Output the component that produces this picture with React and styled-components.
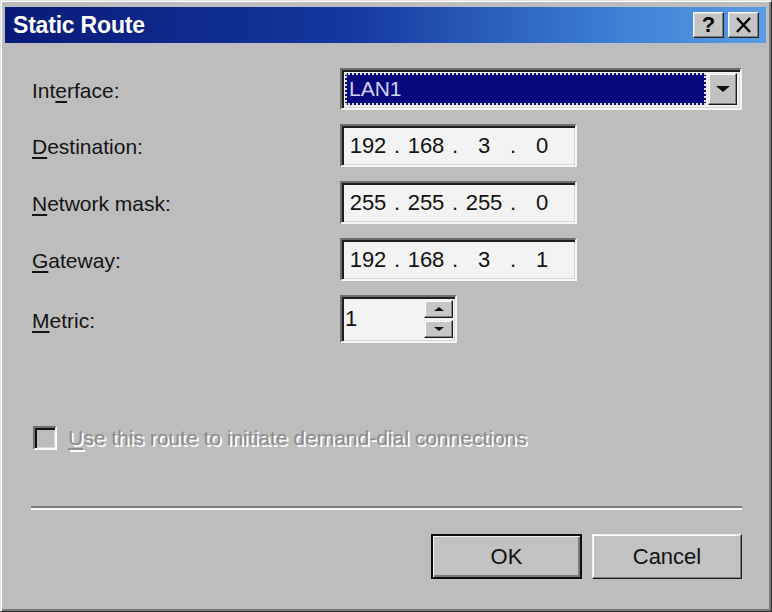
import React from 'react';
import styled, { createGlobalStyle } from 'styled-components';

const GlobalStyle = createGlobalStyle`
  html, body {
    margin: 0;
    padding: 0;
    background: #ffffff;
  }
  body {
    font-family: "Liberation Sans", Arial, sans-serif;
  }
`;

const FACE = '#bdbdbd';

/** outer dialog frame */
const Window = styled.div`
  width: 772px;
  height: 612px;
  box-sizing: border-box;
  background: ${FACE};
  border-top: 1px solid #e2e2e2;
  border-left: 1px solid #e2e2e2;
  border-right: 1px solid #2e2e2e;
  border-bottom: 1px solid #2e2e2e;
  box-shadow: inset 1px 1px 0 #ffffff, inset -2px -2px 0 #7a7a7a;
  padding: 6px 5px 5px 4px;
  display: flex;
  flex-direction: column;
  font-family: "Liberation Sans", Arial, sans-serif;
  color: #111;
`;

const TitleBar = styled.div`
  height: 36px;
  flex-shrink: 0;
  display: flex;
  align-items: center;
  justify-content: space-between;
  padding: 0 7px 0 8px;
  background: linear-gradient(to right, #081a78 0%, #14379e 45%, #3d7fd4 80%, #5b9ce4 100%);
`;

const Title = styled.span`
  color: #ffffff;
  font-size: 23px;
  font-weight: bold;
  letter-spacing: -0.2px;
`;

const TitleButtons = styled.div`
  display: flex;
  gap: 4px;
`;

const CaptionButton = styled.div`
  width: 31px;
  height: 26px;
  box-sizing: border-box;
  background: #c4c4c4;
  border-top: 1px solid #f4f4f4;
  border-left: 1px solid #f4f4f4;
  border-right: 1px solid #222;
  border-bottom: 1px solid #222;
  box-shadow: inset -1px -1px 0 #808080, inset 1px 1px 0 #dedede;
  display: flex;
  align-items: center;
  justify-content: center;
  font-size: 22px;
  font-weight: ${p => (p.bold ? 'bold' : 'normal')};
  color: #000;
  line-height: 1;
`;

const Body = styled.div`
  flex: 1;
  display: flex;
  flex-direction: column;
  padding: 25px 24px 0 27px;
`;

const Form = styled.div`
  display: grid;
  grid-template-columns: 308px auto;
  row-gap: 14px;
  align-items: center;
  justify-items: start;
`;

const Label = styled.span`
  font-size: 21px;
  color: #141414;
  padding-top: 3px;
`;

const Mnemonic = styled.span`
  text-decoration: underline;
  text-underline-offset: 3px;
  text-decoration-thickness: 2px;
`;

/** sunken 3D edge shared by edit boxes */
const Sunken = styled.div`
  box-sizing: border-box;
  border-top: 2px solid #6e6e6e;
  border-left: 2px solid #6e6e6e;
  border-right: 2px solid #f6f6f6;
  border-bottom: 2px solid #f6f6f6;
  box-shadow: inset 2px 2px 0 #1e1e1e, inset -1px -1px 0 #d6d6d6;
`;

const Combo = styled(Sunken)`
  width: 402px;
  height: 42px;
  background: #f2f2f2;
  display: flex;
  align-items: stretch;
  padding: 3px 3px 3px 3px;
  gap: 2px;
`;

const ComboValue = styled.div`
  flex: 1;
  background: #08087e;
  outline: 2px dotted #e0e0d0;
  outline-offset: -2px;
  color: #d4d4f4;
  font-size: 21px;
  display: flex;
  align-items: center;
  padding-left: 4px;
`;

const RaisedButton = styled.div`
  box-sizing: border-box;
  background: #c2c2c2;
  border-top: 1px solid #efefef;
  border-left: 1px solid #efefef;
  border-right: 1px solid #1c1c1c;
  border-bottom: 1px solid #1c1c1c;
  box-shadow: inset -1px -1px 0 #808080, inset 1px 1px 0 #ffffff;
  display: flex;
  align-items: center;
  justify-content: center;
`;

const DropButton = styled(RaisedButton)`
  width: 29px;
`;

const Arrow = styled.span`
  width: 0;
  height: 0;
  border-left: ${p => p.size}px solid transparent;
  border-right: ${p => p.size}px solid transparent;
  ${p => (p.up ? 'border-bottom' : 'border-top')}: ${p => Math.round(p.size * 0.8)}px solid #111;
`;

const IpField = styled(Sunken)`
  width: 237px;
  height: 43px;
  background: #f3f3f3;
  display: flex;
  align-items: center;
  padding-left: 3px;
  font-size: 22px;
  color: #111;
`;

const Octet = styled.span`
  width: 46px;
  text-align: center;
`;

const Dot = styled.span`
  width: 12px;
  text-align: center;
`;

const Spinner = styled(Sunken)`
  width: 117px;
  height: 48px;
  background: #f3f3f3;
  display: flex;
  align-items: stretch;
  padding: 3px 2px 3px 0;
`;

const SpinValue = styled.div`
  flex: 1;
  font-size: 22px;
  display: flex;
  align-items: center;
  padding-left: 3px;
`;

const SpinButtons = styled.div`
  width: 29px;
  display: flex;
  flex-direction: column;
  gap: 2px;
`;

const SpinButton = styled(RaisedButton)`
  flex: 1;
  background: #c6c6c6;
`;

const CheckRow = styled.div`
  margin-top: 83px;
  margin-left: 1px;
  display: flex;
  align-items: center;
  gap: 11px;
`;

const CheckBox = styled.div`
  width: 24px;
  height: 24px;
  box-sizing: border-box;
  background: #bdbdbd;
  border-top: 2px solid #707070;
  border-left: 2px solid #707070;
  border-right: 2px solid #fafafa;
  border-bottom: 2px solid #fafafa;
  box-shadow: inset 2px 2px 0 #111, inset -1px -1px 0 #d8d8d8;
`;

const DisabledText = styled.span`
  font-size: 21px;
  color: #8c8c8c;
  text-shadow: 2px 2px 0 #ffffff;
`;

const Separator = styled.div`
  margin-top: 56px;
  margin-left: -1px;
  height: 0;
  border-top: 2px solid #7c7c7c;
  border-bottom: 2px solid #f6f6f6;
`;

const ButtonRow = styled.div`
  margin-top: 24px;
  display: flex;
  justify-content: flex-end;
  gap: 10px;
`;

const DialogButton = styled(RaisedButton)`
  width: ${p => p.width}px;
  height: 45px;
  font-size: 22px;
  color: #111;
  ${p =>
    p.primary &&
    `
    border: 2px solid #0c0c0c;
    box-shadow: inset 1px 1px 0 #f4f4f4, inset -2px -2px 0 #7a7a7a;
  `}
`;

const IpAddress = ({ parts }) => (
  <IpField>
    {parts.map((p, i) => (
      <React.Fragment key={i}>
        <Octet>{p}</Octet>
        {i < parts.length - 1 && <Dot>.</Dot>}
      </React.Fragment>
    ))}
  </IpField>
);

export default function App() {
  return (
    <>
      <GlobalStyle />
      <Window>
        <TitleBar>
          <Title>Static Route</Title>
          <TitleButtons>
            <CaptionButton bold>?</CaptionButton>
            <CaptionButton>
              <svg width="17" height="16" viewBox="0 0 17 16">
                <path d="M2 1 L15 15 M15 1 L2 15" stroke="#000" strokeWidth="2.4" fill="none" />
              </svg>
            </CaptionButton>
          </TitleButtons>
        </TitleBar>

        <Body>
          <Form>
            <Label>Int<Mnemonic>e</Mnemonic>rface:</Label>
            <Combo>
              <ComboValue>LAN1</ComboValue>
              <DropButton><Arrow size={7} /></DropButton>
            </Combo>

            <Label><Mnemonic>D</Mnemonic>estination:</Label>
            <IpAddress parts={['192', '168', '3', '0']} />

            <Label><Mnemonic>N</Mnemonic>etwork mask:</Label>
            <IpAddress parts={['255', '255', '255', '0']} />

            <Label><Mnemonic>G</Mnemonic>ateway:</Label>
            <IpAddress parts={['192', '168', '3', '1']} />

            <Label><Mnemonic>M</Mnemonic>etric:</Label>
            <Spinner>
              <SpinValue>1</SpinValue>
              <SpinButtons>
                <SpinButton><Arrow up size={5} /></SpinButton>
                <SpinButton><Arrow size={5} /></SpinButton>
              </SpinButtons>
            </Spinner>
          </Form>

          <CheckRow>
            <CheckBox />
            <DisabledText><Mnemonic>U</Mnemonic>se this route to initiate demand-dial connections</DisabledText>
          </CheckRow>

          <Separator />

          <ButtonRow>
            <DialogButton primary width={151}>OK</DialogButton>
            <DialogButton width={150}>Cancel</DialogButton>
          </ButtonRow>
        </Body>
      </Window>
    </>
  );
}
